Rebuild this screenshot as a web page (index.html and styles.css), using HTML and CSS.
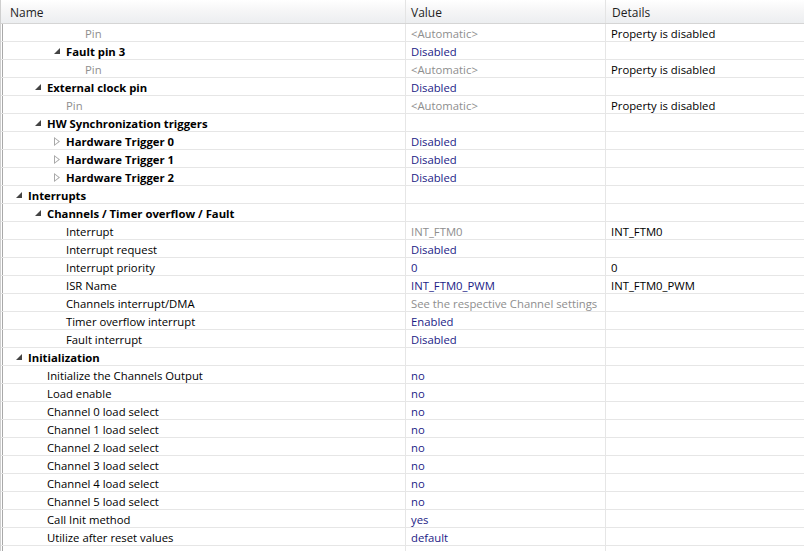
FILE: index.html
```html
<!DOCTYPE html>
<html>
<head>
<meta charset="utf-8">
<link rel="stylesheet" href="styles.css">
</head>
<body>
<div class="tree">
  <div class="head">
    <div class="hc c-name">Name</div>
    <div class="hc c-val">Value</div>
    <div class="hc c-det">Details</div>
  </div>
  <div class="rows">
    <div class="row"><div class="cell name l3"><span class="tw"></span><span class="gray">Pin</span></div><div class="cell val gray">&lt;Automatic&gt;</div><div class="cell det">Property is disabled</div></div>
    <div class="row"><div class="cell name l2"><span class="tw open"></span><b>Fault pin 3</b></div><div class="cell val">Disabled</div><div class="cell det"></div></div>
    <div class="row"><div class="cell name l3"><span class="tw"></span><span class="gray">Pin</span></div><div class="cell val gray">&lt;Automatic&gt;</div><div class="cell det">Property is disabled</div></div>
    <div class="row"><div class="cell name l1"><span class="tw open"></span><b>External clock pin</b></div><div class="cell val">Disabled</div><div class="cell det"></div></div>
    <div class="row"><div class="cell name l2"><span class="tw"></span><span class="gray">Pin</span></div><div class="cell val gray">&lt;Automatic&gt;</div><div class="cell det">Property is disabled</div></div>
    <div class="row"><div class="cell name l1"><span class="tw open"></span><b>HW Synchronization triggers</b></div><div class="cell val"></div><div class="cell det"></div></div>
    <div class="row"><div class="cell name l2"><span class="tw closed"></span><b>Hardware Trigger 0</b></div><div class="cell val">Disabled</div><div class="cell det"></div></div>
    <div class="row"><div class="cell name l2"><span class="tw closed"></span><b>Hardware Trigger 1</b></div><div class="cell val">Disabled</div><div class="cell det"></div></div>
    <div class="row"><div class="cell name l2"><span class="tw closed"></span><b>Hardware Trigger 2</b></div><div class="cell val">Disabled</div><div class="cell det"></div></div>
    <div class="row"><div class="cell name l0"><span class="tw open"></span><b>Interrupts</b></div><div class="cell val"></div><div class="cell det"></div></div>
    <div class="row"><div class="cell name l1"><span class="tw open"></span><b>Channels / Timer overflow / Fault</b></div><div class="cell val"></div><div class="cell det"></div></div>
    <div class="row"><div class="cell name l2"><span class="tw"></span>Interrupt</div><div class="cell val gray">INT_FTM0</div><div class="cell det">INT_FTM0</div></div>
    <div class="row"><div class="cell name l2"><span class="tw"></span>Interrupt request</div><div class="cell val">Disabled</div><div class="cell det"></div></div>
    <div class="row"><div class="cell name l2"><span class="tw"></span>Interrupt priority</div><div class="cell val">0</div><div class="cell det">0</div></div>
    <div class="row"><div class="cell name l2"><span class="tw"></span>ISR Name</div><div class="cell val">INT_FTM0_PWM</div><div class="cell det">INT_FTM0_PWM</div></div>
    <div class="row"><div class="cell name l2"><span class="tw"></span>Channels interrupt/DMA</div><div class="cell val gray">See the respective Channel settings</div><div class="cell det"></div></div>
    <div class="row"><div class="cell name l2"><span class="tw"></span>Timer overflow interrupt</div><div class="cell val">Enabled</div><div class="cell det"></div></div>
    <div class="row"><div class="cell name l2"><span class="tw"></span>Fault interrupt</div><div class="cell val">Disabled</div><div class="cell det"></div></div>
    <div class="row"><div class="cell name l0"><span class="tw open"></span><b>Initialization</b></div><div class="cell val"></div><div class="cell det"></div></div>
    <div class="row"><div class="cell name l1"><span class="tw"></span>Initialize the Channels Output</div><div class="cell val">no</div><div class="cell det"></div></div>
    <div class="row"><div class="cell name l1"><span class="tw"></span>Load enable</div><div class="cell val">no</div><div class="cell det"></div></div>
    <div class="row"><div class="cell name l1"><span class="tw"></span>Channel 0 load select</div><div class="cell val">no</div><div class="cell det"></div></div>
    <div class="row"><div class="cell name l1"><span class="tw"></span>Channel 1 load select</div><div class="cell val">no</div><div class="cell det"></div></div>
    <div class="row"><div class="cell name l1"><span class="tw"></span>Channel 2 load select</div><div class="cell val">no</div><div class="cell det"></div></div>
    <div class="row"><div class="cell name l1"><span class="tw"></span>Channel 3 load select</div><div class="cell val">no</div><div class="cell det"></div></div>
    <div class="row"><div class="cell name l1"><span class="tw"></span>Channel 4 load select</div><div class="cell val">no</div><div class="cell det"></div></div>
    <div class="row"><div class="cell name l1"><span class="tw"></span>Channel 5 load select</div><div class="cell val">no</div><div class="cell det"></div></div>
    <div class="row"><div class="cell name l1"><span class="tw"></span>Call Init method</div><div class="cell val">yes</div><div class="cell det"></div></div>
    <div class="row"><div class="cell name l1"><span class="tw"></span>Utilize after reset values</div><div class="cell val">default</div><div class="cell det"></div></div>
    <div class="row empty"><div class="cell name"></div><div class="cell val"></div><div class="cell det"></div></div>
  </div>
</div>
</body>
</html>
```
FILE: styles.css
```css
html, body {
  margin: 0;
  padding: 0;
  background: #fff;
}
body {
  font-family: "Open Sans", "Noto Sans", sans-serif;
  font-size: 11.3px;
  color: #000;
  width: 804px;
  height: 551px;
  overflow: hidden;
}
.tree {
  height: 551px;
  border-left: 1px solid #cfcfcf;
  box-shadow: inset 1px 0 0 #fff, inset 2px 0 0 #a9a9a9;
  overflow: hidden;
}
.head {
  display: grid;
  grid-template-columns: 405px 200px 1fr;
  height: 23px;
  background: linear-gradient(#ffffff, #f5f5f6 50%, #eceef0);
  border-bottom: 1px solid #d5d5d5;
}
.hc {
  display: flex;
  align-items: center;
  padding-top: 1px;
  border-right: 1px solid #e4e4e4;
  color: #1e1e1e;
  font-size: 12px;
}
.c-name { padding-left: 9px; }
.c-val { padding-left: 5px; }
.c-det { padding-left: 6px; border-right: none; }
.row {
  display: grid;
  grid-template-columns: 405px 200px 1fr;
  height: 18px;
}
.cell {
  display: flex;
  align-items: center;
  white-space: nowrap;
  border-bottom: 1px solid #e6e6e6;
  border-right: 1px solid #e6e6e6;
  padding-top: 1px;
  box-sizing: border-box;
  height: 18px;
}
.row.empty .cell { border-bottom: none; }
.cell.det { border-right: none; padding-left: 5px; }
.cell.val { padding-left: 5px; color: #1b1b86; }
.cell.val.gray, .gray { color: #8e8e8e; }
.name.l0 { padding-left: 14px; }
.name.l1 { padding-left: 33px; }
.name.l2 { padding-left: 52px; }
.name.l3 { padding-left: 71px; }
.name b { font-weight: 700; }
.tw {
  width: 13px;
  height: 10px;
  flex: none;
  position: relative;
}
.tw.open::after {
  content: "";
  position: absolute;
  left: 1px;
  top: 2px;
  width: 0;
  height: 0;
  border-left: 6px solid transparent;
  border-bottom: 6px solid #444;
}
.tw.closed::after {
  content: "";
  position: absolute;
  left: 1px;
  top: 1px;
  width: 6px;
  height: 9px;
  background: #a8a8a8;
  clip-path: polygon(0 0, 100% 50%, 0 100%, 0 0, 1px 1.7px, 1px 7.3px, 4.5px 4.5px, 1px 1.7px);
}
```
